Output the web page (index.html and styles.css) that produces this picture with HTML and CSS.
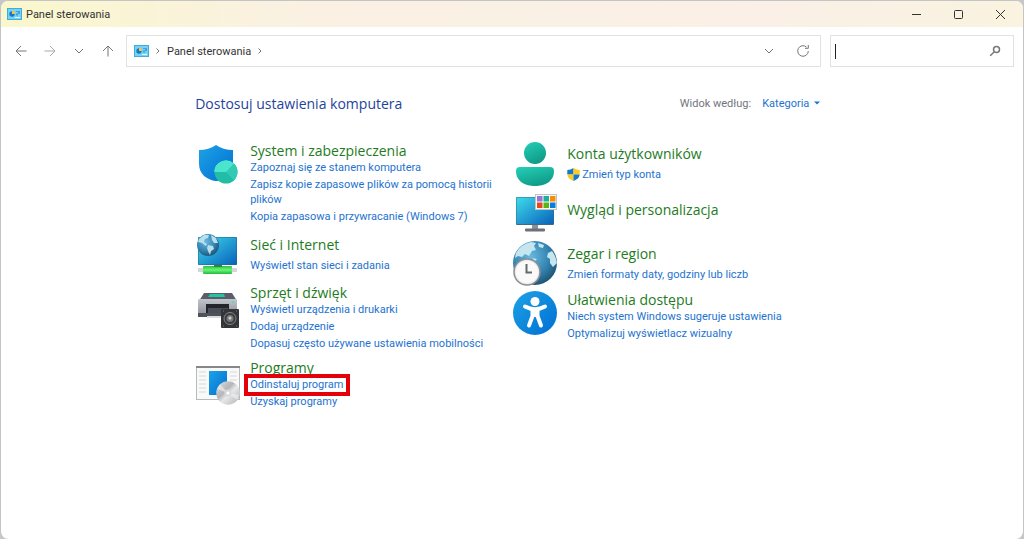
FILE: index.html
```html
<!DOCTYPE html>
<html lang="pl">
<head>
<meta charset="utf-8">
<title>Panel sterowania</title>
<link rel="stylesheet" href="styles.css">
</head>
<body>
<svg class="defs" aria-hidden="true">
  <defs>
    <linearGradient id="blue" x1="0" y1="0" x2="1" y2="1"><stop offset="0" stop-color="#1ea2e6"/><stop offset="1" stop-color="#006fd2"/></linearGradient>
    <linearGradient id="screen" x1="0" y1="0" x2="1" y2="1"><stop offset="0" stop-color="#3bdcea"/><stop offset=".5" stop-color="#249ed4"/><stop offset="1" stop-color="#0862ba"/></linearGradient>
    <linearGradient id="teal" x1="0" y1="0" x2=".5" y2="1"><stop offset="0" stop-color="#26cfb8"/><stop offset="1" stop-color="#0f9c88"/></linearGradient>
    <linearGradient id="green" x1="0" y1="0" x2="0" y2="1"><stop offset="0" stop-color="#2fbd45"/><stop offset=".5" stop-color="#6bf777"/><stop offset="1" stop-color="#22b83b"/></linearGradient>
    <radialGradient id="globe" cx=".4" cy=".35" r=".7"><stop offset="0" stop-color="#68b9df"/><stop offset=".6" stop-color="#3484b2"/><stop offset="1" stop-color="#1c506f"/></radialGradient>
    <linearGradient id="metal" x1="0" y1="0" x2="1" y2="1"><stop offset="0" stop-color="#dedfe1"/><stop offset=".4" stop-color="#b4b6b9"/><stop offset=".55" stop-color="#e8e8e9"/><stop offset="1" stop-color="#b0b2b5"/></linearGradient>
    <linearGradient id="printer" x1="0" y1="0" x2="0" y2="1"><stop offset="0" stop-color="#c3c5cc"/><stop offset="1" stop-color="#8e919b"/></linearGradient>
    <symbol id="panel" viewBox="0 0 15 12">
      <rect x=".5" y=".5" width="14" height="11" fill="#74d2f5" stroke="#43aadb"/>
      <circle cx="5" cy="6" r="2.700" fill="#1478c4"/><path d="M5 6V2.800A3 3 0 0 1 8 6z" fill="#f8c34a"/>
      <path d="M9.500 3.500h1M12 3v3M10 5.500v2" stroke="#1971b5"/><path d="M8 9.500h5" stroke="#e7faff"/>
    </symbol>
  </defs>
</svg>
<div class="window">
  <header class="titlebar">
    <svg class="app-icon" aria-hidden="true"><use href="#panel"/></svg>
    <span class="title">Panel sterowania</span>
    <div class="window-buttons">
      <button type="button" aria-label="Minimalizuj"><svg viewBox="0 0 11 11"><path d="M1 5.500h9"/></svg></button>
      <button type="button" aria-label="Maksymalizuj"><svg viewBox="0 0 11 11"><rect x="1.500" y="1.500" width="8" height="8" rx="1"/></svg></button>
      <button type="button" aria-label="Zamknij"><svg viewBox="0 0 11 11"><path d="M1 1l9 9M10 1l-9 9"/></svg></button>
    </div>
  </header>
  <nav class="toolbar">
    <div class="nav-buttons">
      <button type="button" aria-label="Wstecz"><svg viewBox="0 0 12 12"><path d="M11.500 6H1M6 1L1 6l5 5"/></svg></button>
      <button type="button" class="dim" aria-label="Dalej"><svg viewBox="0 0 12 12"><path d="M.5 6H11M6 1l5 5-5 5"/></svg></button>
      <button type="button" aria-label="Ostatnie lokalizacje"><svg viewBox="0 0 12 12"><path d="M2 4l4 4 4-4"/></svg></button>
      <button type="button" aria-label="W górę"><svg viewBox="0 0 12 12"><path d="M6 11.500V1M1 6l5-5 5 5"/></svg></button>
    </div>
    <div class="address">
      <svg class="app-icon" aria-hidden="true"><use href="#panel"/></svg>
      <svg class="crumb" viewBox="0 0 6 8"><path d="M1.500 1.500L4 4 1.500 6.500"/></svg>
      <a class="path" href="#">Panel sterowania</a>
      <svg class="crumb" viewBox="0 0 6 8"><path d="M1.500 1.500L4 4 1.500 6.500"/></svg>
      <button type="button" class="history" aria-label="Poprzednie lokalizacje"><svg viewBox="0 0 12 12"><path d="M2 4l4 4 4-4"/></svg></button>
      <button type="button" aria-label="Odśwież"><svg viewBox="0 0 14 14"><path d="M12.300 7a5.300 5.300 0 1 1-1.800-4M12.300 1v3.300H9"/></svg></button>
    </div>
    <div class="search">
      <span class="cursor"></span>
      <input type="search" aria-label="Wyszukaj">
      <button type="button" aria-label="Szukaj"><svg viewBox="0 0 12 12"><circle cx="7.500" cy="4.500" r="3"/><path d="M5.300 6.700L1.200 10.800"/></svg></button>
    </div>
  </nav>
  <main class="content">
    <div class="heading-row">
      <h1>Dostosuj ustawienia komputera</h1>
      <div class="view">
        <label for="view">Widok według:</label>
        <div class="view-select">
          <select id="view"><option>Kategoria</option></select>
          <svg viewBox="0 0 6 4" aria-hidden="true"><path d="M0 .5h6L3 3.500z"/></svg>
        </div>
      </div>
    </div>
    <div class="columns">
      <div class="column left">
        <section class="category">
          <svg class="icon" viewBox="0 0 44 44" aria-hidden="true">
            <path d="M20 0Q27 5 37 5V19C37 31 28 36 20 36C11 35 3 29 3 19V5Q13 5 20 0z" fill="url(#blue)"/>
            <circle cx="30" cy="27" r="11.500" fill="#22bda7"/><path d="M30 27H18.500A11.500 11.500 0 0 1 38 18.800z" fill="#4be5cd"/><path d="M30 27H18.500A11.500 11.500 0 0 1 38 18.800z" fill="#4be5cd"/><path d="M30 27l8 8.200A11.500 11.500 0 0 0 38 18.800z" fill="#31cbb5"/>
          </svg>
          <div class="text">
            <h2><a href="#">System i zabezpieczenia</a></h2>
            <ul>
              <li><a href="#">Zapoznaj się ze stanem komputera</a></li>
              <li><a href="#">Zapisz kopie zapasowe plików za pomocą historii plików</a></li>
              <li><a href="#">Kopia zapasowa i przywracanie (Windows 7)</a></li>
            </ul>
          </div>
        </section>
        <section class="category single">
          <svg class="icon" viewBox="0 0 44 44" aria-hidden="true">
            <rect x="2" y="5" width="39" height="28" rx="1" fill="#256387"/><rect x="2.500" y="5.500" width="38" height="27" rx="1" fill="url(#screen)"/>
            <rect x="2" y="36" width="39" height="4" fill="#d4d6d8"/><rect x="7" y="34" width="29" height="8" rx="1" fill="url(#green)"/><path d="M18 33h8v2h-8z" fill="#238a35"/>
            <circle cx="12" cy="13" r="11" fill="url(#globe)"/>
            <path d="M3 7L8 3l5 0-1 3-3 1-1 3 3 2-1 2-4-3-4-1zM12 13l5 1 1 3-3 2-1 4-2-4-1-3zM15 3l5 3 2 5-4 0-2-3z" fill="#b9dfec"/>
          </svg>
          <div class="text">
            <h2><a href="#">Sieć i Internet</a></h2>
            <ul><li><a href="#">Wyświetl stan sieci i zadania</a></li></ul>
          </div>
        </section>
        <section class="category">
          <svg class="icon" viewBox="0 0 44 44" aria-hidden="true">
            <path d="M8 6h28l5 8H3z" fill="#5b5e69"/><path d="M14 7h14l1 3H12z" fill="#24c5a4"/>
            <path d="M3 12h37q1 0 1 2v14H2V14q0-2 1-2z" fill="url(#printer)"/><circle cx="37" cy="15" r="1" fill="#38e5bb"/>
            <path d="M10 17h23v9H10z" fill="#23252b"/><path d="M12 21h20v6H12z" fill="#4b4e57"/><path d="M2 26h31v4H2z" fill="#4f525c"/><path d="M11 29h18v2H11z" fill="#d9dbe0"/>
            <rect x="25" y="22" width="18" height="19" rx="1" fill="#333538"/>
            <circle cx="34" cy="31.500" r="6" fill="#3a3b3d" stroke="#858688"/><circle cx="34" cy="31.500" r="3.500" fill="#77787b"/><circle cx="34" cy="31" r="1.500" fill="#ccc"/><path d="M27 24h1M40 24h1M27 39h1M40 39h1" stroke="#77797b"/>
          </svg>
          <div class="text">
            <h2><a href="#">Sprzęt i dźwięk</a></h2>
            <ul>
              <li><a href="#">Wyświetl urządzenia i drukarki</a></li>
              <li><a href="#">Dodaj urządzenie</a></li>
              <li><a href="#">Dopasuj często używane ustawienia mobilności</a></li>
            </ul>
          </div>
        </section>
        <section class="category">
          <svg class="icon" viewBox="0 0 44 44" aria-hidden="true">
            <rect x=".5" y="4.500" width="43" height="33" fill="#f9f9f9" stroke="#b7b9bc"/><path d="M0 5h44" stroke="#85878a" stroke-width="2"/>
            <path d="M3 10h7M3 14h7M3 18h7M3 22h7M3 26h7M3 30h7M34 10h7M34 14h7M34 18h7" stroke="#d5d7d9"/>
            <rect x="13" y="9" width="18" height="24" fill="url(#blue)"/>
            <circle cx="32" cy="31" r="11.800" fill="url(#metal)"/><path d="M32 31L21 27l3-5zM32 31l11 2-2 5z" fill="#f2f2f2" opacity=".6"/><circle cx="32" cy="31" r="3.500" fill="#d8d9db"/><circle cx="32" cy="31" r="1.500" fill="#fff"/>
          </svg>
          <div class="text">
            <h2><a href="#">Programy</a></h2>
            <ul>
              <li><a class="marked" href="#">Odinstaluj program</a></li>
              <li><a href="#">Uzyskaj programy</a></li>
            </ul>
          </div>
        </section>
      </div>
      <div class="column right">
        <section class="category single">
          <svg class="icon" viewBox="0 0 44 44" aria-hidden="true">
            <circle cx="22" cy="12" r="11" fill="url(#teal)"/><path d="M7 26h30q4 0 4 4C41 41 31 45 22 45S3 41 3 30q0-4 4-4z" fill="url(#teal)"/>
          </svg>
          <div class="text">
            <h2><a href="#">Konta użytkowników</a></h2>
            <ul><li><a class="with-shield" href="#"><svg viewBox="0 0 13 13" aria-hidden="true"><path d="M6.500 0Q3.500 2 .3 2V6.500H6.500z" fill="#1877c9"/><path d="M6.500 0Q9.500 2 12.700 2V6.500H6.500z" fill="#fccb1d"/><path d="M.3 6.500Q1 11 6.500 13V6.500z" fill="#fccb1d"/><path d="M12.700 6.500Q12 11 6.500 13V6.500z" fill="#1877c9"/></svg>Zmień typ konta</a></li></ul>
          </div>
        </section>
        <section class="category single solo">
          <svg class="icon" viewBox="0 0 44 44" aria-hidden="true">
            <rect x="3" y="6" width="38" height="28" rx="1" fill="#3e6a85"/><rect x="3.500" y="6.500" width="37" height="26.500" rx="1" fill="url(#screen)"/>
            <path d="M19 34h6v4h-6z" fill="#8a9198"/><rect x="12" y="37.500" width="20" height="3" rx="1" fill="#6b7178"/>
            <rect x="22.500" y="3.500" width="21" height="15" fill="#f8f8f8" stroke="#c2c4c6"/>
            <path d="M24 5h5.500v5.500H24z" fill="#9a73d6"/><path d="M30.500 5H36v5.500h-5.500z" fill="#1cb09c"/><path d="M37 5h5.500v5.500H37z" fill="#f78d07"/><path d="M24 11.500h5.500V17H24z" fill="#e34a1c"/><path d="M30.500 11.500H36V17h-5.500z" fill="#58b512"/><path d="M37 11.500h5.500V17H37z" fill="#077cdb"/>
          </svg>
          <div class="text"><h2><a href="#">Wygląd i personalizacja</a></h2></div>
        </section>
        <section class="category single">
          <svg class="icon" viewBox="0 0 44 44" aria-hidden="true">
            <circle cx="22" cy="22" r="22" fill="url(#globe)"/>
            <path d="M3 12Q8 3 18 1l5 1-2 3 2 4-4 1-3 5-4-2-3 3-4-1-3 2zM25 2l6 2-1 3-4-1zM35 12l4-2q4 5 5 12l-4 4-3-4 0-4-3-2zM19 17l5 1-2 2z" fill="#c5e6ef"/>
            <circle cx="14" cy="31" r="13" fill="#ededed" stroke="#8c8e90" stroke-width="1.500"/><circle cx="14" cy="31" r="11" fill="#fafafa"/><path d="M13.500 23v8.500H19" fill="none" stroke="#66686a" stroke-width="2"/>
          </svg>
          <div class="text">
            <h2><a href="#">Zegar i region</a></h2>
            <ul><li><a href="#">Zmień formaty daty, godziny lub liczb</a></li></ul>
          </div>
        </section>
        <section class="category">
          <svg class="icon" viewBox="0 0 44 44" aria-hidden="true">
            <circle cx="22" cy="22" r="22" fill="url(#blue)"/><circle cx="22" cy="10.500" r="4.500" fill="#fff"/>
            <path d="M12 15.500Q22 21 32 15.500M19.500 19v6L16 34.500M24.500 19v6L28 34.500" fill="none" stroke="#fff" stroke-width="4" stroke-linecap="round" stroke-linejoin="round"/><path d="M18 17h8v9h-8z" fill="#fff"/>
          </svg>
          <div class="text">
            <h2><a href="#">Ułatwienia dostępu</a></h2>
            <ul>
              <li><a href="#">Niech system Windows sugeruje ustawienia</a></li>
              <li><a href="#">Optymalizuj wyświetlacz wizualny</a></li>
            </ul>
          </div>
        </section>
      </div>
    </div>
  </main>
</div>
</body>
</html>
```
FILE: styles.css
```css
* { box-sizing: border-box; }
body {
  margin: 0;
  background: #c8c6c8;
  font: 11px/15px Roboto, "Noto Sans", sans-serif;
  color: #333;
}
button { border: 0; padding: 0; background: none; display: flex; align-items: center; justify-content: center; }
a { color: #1e73d0; text-decoration: none; }
svg { flex: none; }
.defs { position: absolute; width: 0; height: 0; }

.window {
  min-height: 100vh;
  border: 1px solid #c4c4c6;
  border-bottom: 0;
  border-radius: 8px;
  background: #fff;
  overflow: hidden;
}
.titlebar {
  display: flex;
  align-items: center;
  height: 26px;
  padding: 0 2px 0 6px;
  background: linear-gradient(90deg, #faf7cc, #faf1e3 30%, #faf0e7 75%, #f9f3df);
}
.app-icon { width: 15px; height: 12px; }
.title { margin-left: 4px; }
.window-buttons { display: flex; margin-left: auto; }
.window-buttons button { width: 42px; height: 26px; }
.window-buttons svg { width: 11px; height: 11px; fill: none; stroke: #333; }

.toolbar { display: flex; padding: 8px 9px 0 0; }
.toolbar svg { fill: none; stroke: #777; }
.nav-buttons { display: flex; align-items: center; width: 125px; padding-left: 5px; }
.nav-buttons button { width: 29px; height: 32px; }
.nav-buttons svg { width: 12px; height: 12px; }
.nav-buttons .dim svg { stroke: #aaa; }
.address {
  display: flex;
  flex: 1;
  align-items: center;
  height: 32px;
  padding: 0 7px;
  border: 1px solid #e2e2e2;
}
.address .app-icon { stroke: none; }
.crumb { width: 6px; height: 8px; margin: 0 6px; }
.path { color: #333; }
.address button { width: 20px; height: 20px; }
.address button svg { width: 14px; height: 14px; }
.address .history { margin-left: auto; margin-right: 14px; }
.address .history svg { width: 12px; height: 12px; }
.search {
  display: flex;
  align-items: center;
  flex: 0 1 184px;
  height: 32px;
  margin-left: 9px;
  padding: 0 12px 0 4px;
  border: 1px solid #e2e2e2;
}
.cursor { width: 1px; height: 15px; background: #222; }
.search input { flex: 1; min-width: 0; border: 0; padding: 0; background: none; font: inherit; outline: 0; }
.search button svg { width: 12px; height: 12px; stroke-width: 1.5; }

.content { padding: 27px 0 24px 19%; }
.heading-row, .columns { max-width: 625px; }
.heading-row { display: flex; align-items: center; justify-content: space-between; height: 20px; }
h1, h2 { margin: 0; font-family: "Open Sans", "Noto Sans", sans-serif; font-size: 14px; font-weight: 400; }
h1 { line-height: 20px; color: #1f439c; }
.view { display: flex; gap: 11px; padding-bottom: 2px; color: #71767e; }
.view-select { display: flex; align-items: center; gap: 4px; }
.view-select select { appearance: none; border: 0; padding: 0; background: none; font: inherit; color: #1e73d0; }
.view-select svg { width: 6px; height: 4px; fill: #1e73d0; }
.columns { display: grid; grid-template-columns: 1fr 1fr; gap: 10px; padding: 27px 0 0 1px; }
.column { display: flex; flex-direction: column; gap: 6px; }
.left { gap: 8px; padding-top: 1px; }
.category { display: flex; gap: 10px; }
.icon { width: 44px; height: 44px; overflow: visible; }
.left .icon { margin-top: 3px; }
.left .single .icon { margin-top: 0; }
.single { align-items: center; }
h2 { line-height: 18px; }
h2 a { color: #1e7b1e; }
ul { display: flex; flex-direction: column; gap: 2px; margin: 0; padding: 0; list-style: none; }
.single ul { margin-top: 4px; }
.solo .text { padding-bottom: 6px; }
.with-shield { display: flex; align-items: center; gap: 2px; }
.with-shield svg { width: 13px; height: 13px; }
.marked { position: relative; }
.marked::after {
  content: "";
  position: absolute;
  inset: -4px -7px -5px -6px;
  border: 4px solid #e3000b;
}
```
